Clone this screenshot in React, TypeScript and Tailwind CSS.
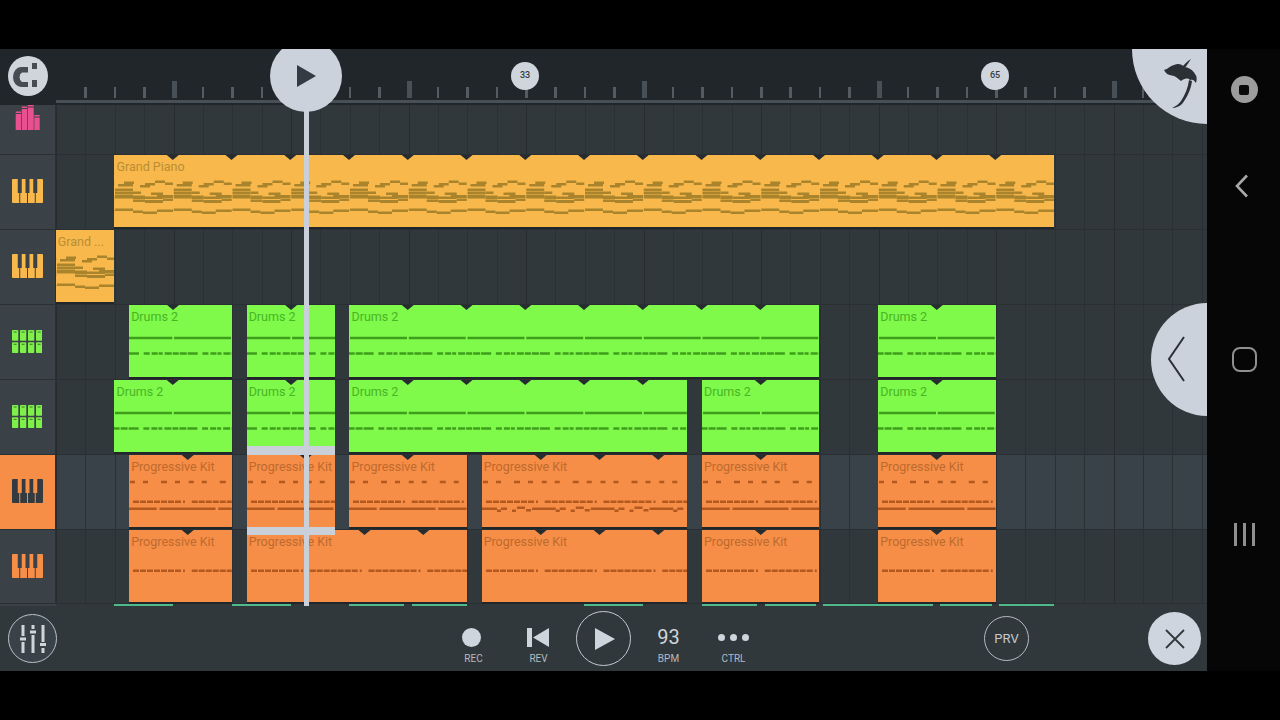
import * as React from "react";

const UNIT = 29.375;
const PERIOD = UNIT * 2;

type Kind = "piano" | "drums" | "kit" | "kitWave" | "kitLow";

interface Clip {
  from: number;
  to: number;
  label: string;
  kind: Kind;
  selected?: boolean;
}

const theme = {
  piano: { bg: "bg-[#f8b84c]", text: "text-[#b98e34]", note: "#a9842c" },
  drums: { bg: "bg-[#7ff94a]", text: "text-[#48b524]", note: "#3f9f1d" },
  kit: { bg: "bg-[#f68e47]", text: "text-[#bd6a2e]", note: "#b3591f" },
  kitWave: { bg: "bg-[#f68e47]", text: "text-[#bd6a2e]", note: "#b3591f" },
  kitLow: { bg: "bg-[#f68e47]", text: "text-[#bd6a2e]", note: "#b3591f" },
};

// x0, x1, y, height inside one two-unit loop of the piano pattern
const pianoLoop: number[][] = [
  [4, 19, 29, 2.5], [10, 20, 26.5, 2.5], [26, 36, 30, 2.5], [31, 41, 28, 2.5], [41, 51, 25.5, 2.5], [51, 59, 27.5, 2.5],
  [1, 19, 33.5, 3], [1, 19, 37, 2.5], [1, 19, 40, 3.5], [19, 31, 40.5, 3.5], [19, 31, 44.5, 2.5], [31, 49, 45, 3],
  [37, 49, 37.5, 2.5], [43, 59, 40, 3], [31, 49, 41.5, 2.5], [49, 59, 43.5, 2.5], [19, 27, 36.5, 2.5],
  [1, 19, 53.5, 2.5], [19, 29, 55.5, 2.5], [29, 43, 56.5, 2.5], [43, 59, 54.5, 2.5],
];

const dashLine = [[4, 10], [11, 17], [18, 24], [25, 31], [32, 38], [39, 45], [46, 52], [54, 56]];
const drumDashes = [[0, 6], [8, 14], [15, 19], [21, 28], [29, 35], [36, 43], [44, 54]];
const kitTicks = [[1, 6], [14, 19], [32, 38], [46, 51]];
const kitWave: number[][] = [
  [0, 15, 52.5, 2.5], [15, 19, 54.5, 2.5], [19, 25, 52.5, 2.5], [30, 34, 54.5, 2.5], [35, 43, 51.5, 2.5], [44, 49, 54, 2.5], [50, 59, 52.5, 2.5],
];

function repeat(segs: number[][], anchor: number, start: number, end: number) {
  const out: number[][] = [];
  const first = Math.floor((start - anchor) / PERIOD) - 1;
  for (let k = first; anchor + k * PERIOD < end; k++) {
    for (const s of segs) {
      const a = Math.max(anchor + k * PERIOD + s[0], start);
      const b = Math.min(anchor + k * PERIOD + s[1], end);
      if (b > a) out.push([a - start, b - start, s[2] ?? 0, s[3] ?? 2.5]);
    }
  }
  return out;
}

function clipNotes(clip: Clip) {
  const start = clip.from * UNIT;
  const end = clip.to * UNIT;
  const at = (segs: number[][], anchor: number, y: number) =>
    repeat(segs, anchor, start, end).map((r) => [r[0], r[1], y, 2.5]);

  if (clip.kind === "piano") return repeat(pianoLoop, 0, start, end);
  if (clip.kind === "drums") {
    return [...at([[1, 58]], 0, 31.75), ...at(drumDashes, UNIT, 47.25)];
  }
  if (clip.kind === "kitLow") return at(dashLine, start, 39.5);
  const top = [...at(kitTicks, start, 25.75), ...at(dashLine, start, 45.5)];
  if (clip.kind === "kitWave") return [...top, ...repeat(kitWave, start, start, end)];
  return [...top, ...at([[1, 57]], start + 29.5, 52.5)];
}

function clipNotches(clip: Clip) {
  const w = (clip.to - clip.from) * UNIT;
  const anchored = clip.kind === "piano" || clip.kind === "drums";
  const first = anchored ? (Math.floor(clip.from / 2) + 1) * 2 * UNIT - clip.from * UNIT : PERIOD;
  const xs: number[] = [];
  for (let x = first; x < w - 4; x += PERIOD) xs.push(x);
  return xs;
}

function ClipBox({ clip }: { clip: Clip }) {
  const t = theme[clip.kind];
  const w = (clip.to - clip.from) * UNIT;
  return (
    <div
      className={`absolute top-0 h-[72px] shadow-[0_2px_0_#20262a] ${t.bg}`}
      style={{ left: clip.from * UNIT - 0.3, width: w }}
    >
      <svg className="absolute inset-0" width={w} height={72}>
        {clipNotes(clip).map((r, i) => (
          <rect key={i} x={r[0]} y={r[2]} width={r[1] - r[0]} height={r[3]} fill={t.note} />
        ))}
        {clipNotches(clip).map((x) => (
          <polygon key={x} points={`${x - 6},0 ${x + 6},0 ${x},5`} fill="#262c30" />
        ))}
      </svg>
      <span className={`absolute left-[2px] top-[4px] whitespace-nowrap text-[12.5px] leading-4 ${t.text}`}>
        {clip.label}
      </span>
      {clip.selected && (
        <>
          <div className="absolute inset-x-0 top-[-9px] z-10 h-[9px] bg-[#c9d0d9]" />
          <div className="absolute inset-x-0 top-[72px] z-10 h-[8px] bg-[#c9d0d9]" />
        </>
      )}
    </div>
  );
}

function PianoIcon({ color, gap }: { color: string; gap: string }) {
  return (
    <svg width="31" height="24" viewBox="0 0 31 24">
      <rect x="0" y="0" width="31" height="24" rx="1" fill={color} />
      {[7.75, 15.5, 23.25].map((x) => (
        <g key={x} fill={gap}>
          <rect x={x - 2} y="0" width="4" height="14" />
          <rect x={x - 0.5} y="14" width="1" height="10" />
        </g>
      ))}
    </svg>
  );
}

function DrumIcon() {
  const cols = [0, 8, 16, 24];
  return (
    <svg width="30" height="23" viewBox="0 0 30 23">
      {[0, 12.3].map((y) =>
        cols.map((x) => (
          <g key={`${x}-${y}`}>
            <rect x={x} y={y} width="6.3" height="10.7" rx="0.8" fill="#7ff04a" />
            <rect x={x + 1.6} y={y + 1.5} width="3" height="1" fill="#3f7a2c" />
          </g>
        )),
      )}
    </svg>
  );
}

function MeterIcon() {
  return (
    <svg width="25" height="25" viewBox="0 0 25 25" fill="#e9508f">
      <rect x="0.7" y="9" width="5.3" height="16" />
      <rect x="0.7" y="6.5" width="5.3" height="1.5" />
      <rect x="6.7" y="4" width="5.3" height="21" />
      <rect x="6.7" y="1.5" width="5.3" height="1.5" />
      <rect x="12.7" y="2.5" width="6" height="22.5" />
      <rect x="12.7" y="0" width="6" height="1.5" />
      <rect x="19.3" y="12.5" width="5.4" height="12.5" />
      <rect x="19.3" y="10" width="5.4" height="1.5" />
    </svg>
  );
}

const rows: { h: string; icon?: React.ReactNode; active?: boolean; clips: Clip[]; iconTop?: boolean }[] = [
  { h: "h-[50px]", icon: <MeterIcon />, iconTop: true, clips: [] },
  {
    h: "h-[75px]",
    icon: <PianoIcon color="#f8b84c" gap="#3a4147" />,
    clips: [{ from: 2, to: 34, label: "Grand Piano", kind: "piano" }],
  },
  {
    h: "h-[75px]",
    icon: <PianoIcon color="#f8b84c" gap="#3a4147" />,
    clips: [{ from: 0, to: 2, label: "Grand ...", kind: "piano" }],
  },
  {
    h: "h-[75px]",
    icon: <DrumIcon />,
    clips: [
      { from: 2.5, to: 6, label: "Drums 2", kind: "drums" },
      { from: 6.5, to: 9.5, label: "Drums 2", kind: "drums" },
      { from: 10, to: 26, label: "Drums 2", kind: "drums" },
      { from: 28, to: 32, label: "Drums 2", kind: "drums" },
    ],
  },
  {
    h: "h-[75px]",
    icon: <DrumIcon />,
    clips: [
      { from: 2, to: 6, label: "Drums 2", kind: "drums" },
      { from: 6.5, to: 9.5, label: "Drums 2", kind: "drums" },
      { from: 10, to: 21.5, label: "Drums 2", kind: "drums" },
      { from: 22, to: 26, label: "Drums 2", kind: "drums" },
      { from: 28, to: 32, label: "Drums 2", kind: "drums" },
    ],
  },
  {
    h: "h-[75px]",
    active: true,
    icon: <PianoIcon color="#343b40" gap="#f68e47" />,
    clips: [
      { from: 2.5, to: 6, label: "Progressive Kit", kind: "kit" },
      { from: 6.5, to: 9.5, label: "Progressive Kit", kind: "kit", selected: true },
      { from: 10, to: 14, label: "Progressive Kit", kind: "kit" },
      { from: 14.5, to: 21.5, label: "Progressive Kit", kind: "kitWave" },
      { from: 22, to: 26, label: "Progressive Kit", kind: "kit" },
      { from: 28, to: 32, label: "Progressive Kit", kind: "kit" },
    ],
  },
  {
    h: "h-[74px]",
    icon: <PianoIcon color="#f68e47" gap="#3a4147" />,
    clips: [
      { from: 2.5, to: 6, label: "Progressive Kit", kind: "kitLow" },
      { from: 6.5, to: 14, label: "Progressive Kit", kind: "kitLow" },
      { from: 14.5, to: 21.5, label: "Progressive Kit", kind: "kitLow" },
      { from: 22, to: 26, label: "Progressive Kit", kind: "kitLow" },
      { from: 28, to: 32, label: "Progressive Kit", kind: "kitLow" },
    ],
  },
];

// peek of the next track, only its clip tops show
const strips = [
  [114, 173], [232, 291], [349, 404], [412, 467], [584, 643], [702, 757], [765, 816], [823, 933], [940, 992], [999, 1054],
];

const gridLines =
  "bg-[repeating-linear-gradient(90deg,#262c30_0,#262c30_1px,transparent_1px,transparent_117.5px),repeating-linear-gradient(90deg,#2a3135_0,#2a3135_1px,transparent_1px,transparent_29.375px)]";

function Ruler() {
  const ticks = Array.from({ length: 38 }, (_, i) => i);
  return (
    <div className="flex h-[56px] shrink-0 bg-[#20262a]">
      <div className="w-[56px] shrink-0 pl-2 pt-[7px]">
        <div className="flex h-10 w-10 items-center justify-center rounded-full bg-[#cfd5db]">
          <svg width="40" height="40" viewBox="0 0 40 40" fill="#454c52">
            <path d="M20 11 H13 A8 10 0 0 0 13 31 H20 V26 H14 A3.5 5 0 0 1 14 16.5 H20 Z" />
            <rect x="24" y="7" width="5" height="6" />
            <rect x="24" y="24" width="5" height="7" />
          </svg>
        </div>
      </div>
      <div className="relative flex-1">
        <div className="flex h-[51px] items-end pb-[2px]">
          {ticks.map((i) => (
            <div key={i} className="flex h-full w-[29.375px] shrink-0 items-end">
              {i === 0 ? null : (i + 4) % 8 === 0 ? (
                <div className="ml-[-2px] h-[17px] w-[5px] bg-[#465056]" />
              ) : (
                <div className="ml-[-1px] h-[11px] w-[2.5px] bg-[#545c61]" />
              )}
            </div>
          ))}
        </div>
        <div className="h-[3px] bg-[#465056]" />
        <div className="absolute left-[455px] top-[13px] flex h-7 w-7 items-center justify-center rounded-full bg-[#cfd5dc] text-[9px] font-medium text-[#343b40]">
          33
        </div>
        <div className="absolute left-[925px] top-[13px] flex h-7 w-7 items-center justify-center rounded-full bg-[#cfd5dc] text-[9px] font-medium text-[#343b40]">
          65
        </div>
      </div>
    </div>
  );
}

function Tracks() {
  return (
    <div className="flex flex-col">
      {rows.map((row, i) => (
        <div key={i} className={`flex ${row.h} border-b border-[#292f33]`}>
          <div
            className={`flex w-[56px] shrink-0 justify-center border-r border-[#292f33] pr-[1px] ${
              row.active ? "bg-[#f68e47]" : "bg-[#3a4147]"
            } ${row.iconTop ? "items-start" : "items-center pb-[2px]"}`}
          >
            {row.icon}
          </div>
          <div className={`relative flex-1 ${gridLines} ${row.active ? "bg-[#3a4249]" : "bg-[#30383c]"}`}>
            {row.clips.map((c) => (
              <ClipBox key={c.from} clip={c} />
            ))}
          </div>
        </div>
      ))}
      <div className="flex h-[2px]">
        <div className="w-[56px] shrink-0 bg-[#3a4147]" />
        <div className="relative flex-1 bg-[#30383c]">
          {strips.map(([a, b]) => (
            <div
              key={a}
              className="absolute inset-y-0 bg-[#4fb98a]"
              style={{ left: a - 56, width: b - a }}
            />
          ))}
        </div>
      </div>
    </div>
  );
}

function Label({ children }: { children: React.ReactNode }) {
  return <span className="text-[10px] leading-3 text-[#b4bac0]">{children}</span>;
}

function Transport() {
  return (
    <div className="flex h-[65px] items-center bg-[#30383c] pl-2">
      <div className="flex h-[49px] w-[49px] shrink-0 items-center justify-center rounded-full border-[1.5px] border-[#bcc2c8] bg-[#3a4249]">
        <svg width="32" height="32" viewBox="0 0 32 32" fill="#cfd5db">
          <rect x="4.5" y="2" width="3" height="11" />
          <rect x="3" y="14.5" width="6" height="3" />
          <rect x="4.5" y="19" width="3" height="11" />
          <rect x="14.5" y="2" width="3" height="4" />
          <rect x="13" y="7.5" width="6" height="3" />
          <rect x="14.5" y="12" width="3" height="18" />
          <rect x="24.5" y="2" width="3" height="17" />
          <rect x="23" y="20" width="6" height="3" />
          <rect x="24.5" y="25" width="3" height="5" />
        </svg>
      </div>
      <div className="ml-[384px] flex w-[325px] items-center">
        <div className="flex w-[65px] flex-col items-center gap-[6px] pt-4">
          <div className="mr-[5px] h-[19px] w-[19px] rounded-full bg-[#cfd5dc]" />
          <Label>REC</Label>
        </div>
        <div className="flex w-[65px] flex-col items-center gap-[6px] pt-4">
          <svg width="23" height="19" viewBox="0 0 23 19" fill="#cfd5dc">
            <rect x="0" y="0" width="5" height="19" />
            <polygon points="6,9.5 22,0 22,19" />
          </svg>
          <Label>REV</Label>
        </div>
        <div className="flex w-[65px] justify-center">
          <div className="flex h-[55px] w-[55px] shrink-0 items-center justify-center rounded-full border-[1.5px] border-[#c4cad0]">
            <svg width="20" height="22" viewBox="0 0 20 22" fill="#cfd5dc" className="ml-[2px]">
              <polygon points="0,0 20,11 0,22" />
            </svg>
          </div>
        </div>
        <div className="flex w-[65px] flex-col items-center gap-[3.5px] pt-[12.5px]">
          <span className="text-[20px] leading-[25px] text-[#cfd5dc]">93</span>
          <Label>BPM</Label>
        </div>
        <div className="flex w-[65px] flex-col items-center gap-[6px] pt-4">
          <div className="flex h-[19px] items-center gap-[5px]">
            <div className="h-[7px] w-[7px] rounded-full bg-[#cfd5dc]" />
            <div className="h-[7px] w-[7px] rounded-full bg-[#cfd5dc]" />
            <div className="h-[7px] w-[7px] rounded-full bg-[#cfd5dc]" />
          </div>
          <Label>CTRL</Label>
        </div>
      </div>
      <div className="ml-[218px] flex h-[45px] w-[45px] shrink-0 items-center justify-center rounded-full border-[1.5px] border-[#b4bac0] text-[13px] text-[#c4cad0]">
        PRV
      </div>
      <div className="ml-[119px] flex h-[53px] w-[53px] shrink-0 items-center justify-center rounded-full bg-[#cfd5df]">
        <svg width="20" height="20" viewBox="0 0 20 20" fill="none" stroke="#30383c" strokeWidth="1.8">
          <path d="M1 1 L19 19 M19 1 L1 19" />
        </svg>
      </div>
    </div>
  );
}

function Overlays() {
  return (
    <>
      {/* playhead */}
      <div className="absolute left-[304px] top-[50px] z-20 h-[507px] w-[4.5px] bg-[#c9d0d9]" />
      <div className="absolute left-[270px] top-[-9px] z-20 flex h-[72px] w-[72px] items-center justify-center rounded-full bg-[#ccd2dc]">
        <svg width="19" height="22" viewBox="0 0 19 22" fill="#343b42">
          <polygon points="0,0 19,11 0,22" />
        </svg>
      </div>
      {/* FL logo corner */}
      <div className="absolute left-[1132px] top-[-75px] z-20 h-[150px] w-[150px] rounded-full bg-[#ccd2dc]" />
      <svg className="absolute left-[1160px] top-[6px] z-20" width="40" height="57" viewBox="0 0 40 57" fill="#2a3036">
        <path d="M4 15 C8 14 10 11 14 10 C18 8 22 9 24 12 C28 12 33 15 35 19 C37 21 37 24 36 28 C34 25 33 24 30 25 C27 22 24 24 21 26 C18 24 17 22 14 21 C11 20 8 20 6 18 Z" />
        <path d="M22 12 C25 9 27 6 31 4 C29 7 27 10 25 13 Z" />
        <path d="M32 26 C31 35 26 44 22 49 C20 51 16 53 12 53 C16 51 19 49 21 46 C25 40 28 33 29 25 Z" />
      </svg>
      {/* side panel handle */}
      <div className="absolute left-[1151px] top-[254px] z-20 h-[113px] w-[113px] rounded-full bg-[#ccd2dc]" />
      <svg className="absolute left-[1166px] top-[286px] z-20" width="22" height="48" viewBox="0 0 22 48" fill="none" stroke="#2a3036" strokeWidth="2">
        <path d="M18 2 L3 24 L18 46" />
      </svg>
    </>
  );
}

function NavBar() {
  return (
    <div className="flex w-[73px] shrink-0 flex-col items-center bg-[#060606] pt-[27px]">
      <div className="ml-[1px] flex h-[27px] w-[27px] items-center justify-center rounded-full bg-[#9c9c9c]">
        <div className="h-[10px] w-[10px] rounded-[2px] bg-[#0a0a0a]" />
      </div>
      <svg className="mr-[3px] mt-[71px]" width="16" height="24" viewBox="0 0 16 24" fill="none" stroke="#a8a8a8" strokeWidth="2.6">
        <path d="M13 1.5 L3 12 L13 22.5" />
      </svg>
      <div className="mr-[-1px] mt-[149px] h-[25px] w-[25px] rounded-[8px] border-[2.5px] border-[#8f8f8f]" />
      <div className="mr-[-1px] mt-[151px] flex h-[23px] gap-[6px]">
        <div className="h-full w-[3px] bg-[#8f8f8f]" />
        <div className="h-full w-[3px] bg-[#8f8f8f]" />
        <div className="h-full w-[3px] bg-[#8f8f8f]" />
      </div>
    </div>
  );
}

export default function App() {
  return (
    <div className="flex h-[720px] w-[1280px] flex-col overflow-hidden bg-black font-['Roboto',sans-serif]">
      <div className="h-[49px] shrink-0 bg-black" />
      <div className="flex h-[622px] shrink-0">
        <div className="relative flex w-[1207px] shrink-0 flex-col overflow-hidden">
          <Ruler />
          <Tracks />
          <Transport />
          <Overlays />
        </div>
        <NavBar />
      </div>
      <div className="flex-1 bg-black" />
    </div>
  );
}
